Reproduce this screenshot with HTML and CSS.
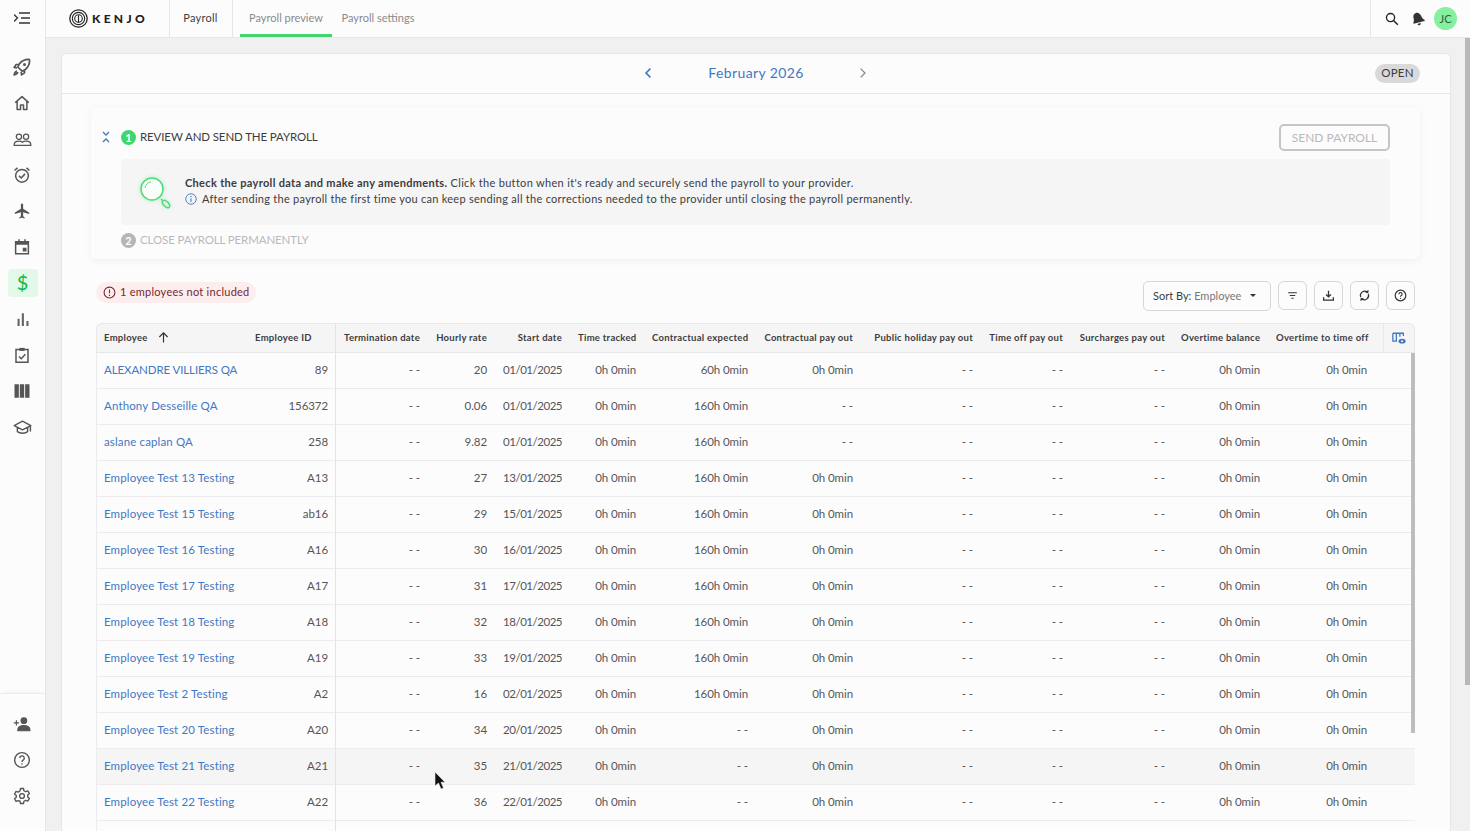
FILE: index.html
```html
<!DOCTYPE html>
<html lang="en">
<head>
<meta charset="utf-8">
<title>Kenjo Payroll</title>
<link rel="stylesheet" href="styles.css">
</head>
<body>
<div class="app">
  <aside class="side">
    <div class="side-head">
      <svg class="ico-ham" viewBox="0 0 16 12" width="16" height="12"><path d="M5 1h11M7 6h9M5 11h11M0 2.500l3.500 3.500L0 9.500" fill="none" stroke="#333" stroke-width="1.300"/></svg>
    </div>
    <nav class="side-top">
      <div class="nav"><svg viewBox="0 0 24 24" width="20" height="20"><path d="M21 3c-5-.5-9 1.500-12 5l-2 4 5 5 4-2c3.500-3 5.500-7 5-12zM8 9H5l-2.500 3.500L6 13M15 16v3l-3.500 2.500L11 18M6 17c-2 .5-3 2-3.500 4.500C5 21 6.500 20 7 18" fill="none" stroke="#555" stroke-width="2" stroke-linejoin="round"/><circle cx="15" cy="9" r="1.800" fill="#555"/></svg></div>
      <div class="nav"><svg viewBox="0 0 24 24" width="18" height="18"><path d="M3 11.500 12 3.500l9 8M5.500 10v10.500h4.500v-6h4v6h4.500V10" fill="none" stroke="#555" stroke-width="2" stroke-linejoin="round"/></svg></div>
      <div class="nav"><svg viewBox="0 0 24 24" width="19" height="19"><circle cx="7.500" cy="8.500" r="3.300" fill="none" stroke="#555" stroke-width="1.600"/><circle cx="16.500" cy="8.500" r="3.300" fill="none" stroke="#555" stroke-width="1.600"/><path d="M1.500 18.500c0-3 2.500-4.500 6-4.500 2 0 3.500.5 4.500 1.500 1-1 2.500-1.500 4.500-1.500 3.500 0 6 1.500 6 4.500v1h-21z" fill="none" stroke="#555" stroke-width="1.600" stroke-linejoin="round"/></svg></div>
      <div class="nav"><svg viewBox="0 0 24 24" width="18" height="18"><circle cx="12" cy="13" r="8.500" fill="none" stroke="#555" stroke-width="2"/><path d="m8 13 3 3 5-5.500M2 6l4-3.500M22 6l-4-3.500" fill="none" stroke="#555" stroke-width="2"/></svg></div>
      <div class="nav"><svg viewBox="0 0 24 24" width="18" height="18"><path d="M21 16v-2l-8-5V3.500a1.500 1.500 0 0 0-3 0V9l-8 5v2l8-2.500V19l-2 1.500V22l3.500-1 3.500 1v-1.500L13 19v-5.500z" fill="#555" transform="translate(.5 0)"/></svg></div>
      <div class="nav"><svg viewBox="0 0 24 24" width="18" height="18"><path d="M3.500 5h17v16h-17z" fill="none" stroke="#555" stroke-width="2"/><path d="M3.500 4h17v5h-17zM7 1.500h2V5H7zM15 1.500h2V5h-2zM13 13h5v5h-5z" fill="#555"/></svg></div>
      <div class="nav"><div class="nav-on">$</div></div>
      <div class="nav"><svg viewBox="0 0 24 24" width="17" height="17"><path d="M5 11h3v10H5zM11 3h3v18h-3zM17.500 14h3v7h-3z" fill="#666"/></svg></div>
      <div class="nav"><svg viewBox="0 0 24 24" width="18" height="18"><path d="M4 4.500h16v17H4z" fill="none" stroke="#555" stroke-width="2"/><path d="M8.500 2.500h7v4h-7z" fill="#555"/><path d="m8 14 3 3 5.500-6" fill="none" stroke="#555" stroke-width="2"/></svg></div>
      <div class="nav"><svg viewBox="0 0 24 24" width="18" height="18"><path d="M2 3h5.800v18H2zM9.100 3h5.800v18H9.100zM16.200 3H22v18h-5.800z" fill="#555"/></svg></div>
      <div class="nav"><svg viewBox="0 0 24 24" width="19" height="19"><path d="M12 4 1.500 9.500 12 15l10.500-5.500zM5.500 12v5c2 3 11 3 13 0v-5M22 10v7" fill="none" stroke="#555" stroke-width="1.800" stroke-linejoin="round"/></svg></div>
    </nav>
    <div class="side-bottom">
      <div class="nav"><svg viewBox="0 0 24 24" width="18" height="18"><circle cx="14.500" cy="7.500" r="4.500" fill="#555"/><path d="M6.500 21v-2c0-3 4-5 8-5s8 2 8 5v2zM1 10.500h7M4.500 7v7" fill="#555" stroke="#555" stroke-width="1.500"/></svg></div>
      <div class="nav"><svg viewBox="0 0 24 24" width="18" height="18"><circle cx="12" cy="12" r="9.800" fill="none" stroke="#555" stroke-width="1.800"/><path d="M9 9.500a3 3 0 1 1 4.500 2.600c-1 .6-1.500 1.200-1.500 2.400" fill="none" stroke="#555" stroke-width="1.800"/><circle cx="12" cy="17.300" r="1.100" fill="#555"/></svg></div>
      <div class="nav"><svg viewBox="0 0 24 24" width="18" height="18"><path d="m10 2h4l.6 3 2.400 1.300 2.900-1 2 3.500-2.300 2v2.400l2.300 2-2 3.500-2.900-1-2.400 1.300-.6 3h-4l-.6-3L7 18.200l-2.900 1-2-3.500 2.300-2v-2.400l-2.300-2 2-3.500 2.900 1L9.400 5z" fill="none" stroke="#555" stroke-width="1.800" stroke-linejoin="round"/><circle cx="12" cy="12" r="3.200" fill="none" stroke="#555" stroke-width="1.800"/></svg></div>
    </div>
  </aside>

  <div class="body">
    <header class="top">
      <div class="brand">
        <svg viewBox="0 0 24 24" width="19" height="19"><circle cx="12" cy="12" r="11" fill="none" stroke="#222" stroke-width="1.600"/><circle cx="12" cy="12" r="7.800" fill="none" stroke="#222" stroke-width="1.400"/><circle cx="12" cy="12" r="4.800" fill="none" stroke="#222" stroke-width="1.400"/><path d="M12 8v9" stroke="#222" stroke-width="1.400"/></svg>
        <span class="brand-name">KENJO</span>
      </div>
      <div class="top-title">Payroll</div>
      <nav class="tabs">
        <a class="tab tab-on">Payroll preview</a>
        <a class="tab">Payroll settings</a>
      </nav>
      <div class="top-right">
        <svg viewBox="0 0 24 24" width="14" height="14"><circle cx="9.500" cy="9.500" r="7" fill="none" stroke="#222" stroke-width="2.300"/><path d="m14.500 14.500 7.500 7.500" stroke="#222" stroke-width="2.500"/></svg>
        <svg class="bell" viewBox="0 0 24 24" width="14" height="14"><path d="M11 1c4 0 7 3 7.500 7.500.3 3.500 1.500 5.500 4.500 8l-1 1.500H3l-.5-1.500C5 14 5 11 5 8c0-4 2.500-7 6-7zM9 20h6c-.3 2-1.500 3-3 3s-2.700-1-3-3z" fill="#333" transform="rotate(-14 12 12)"/></svg>
        <div class="avatar">JC</div>
      </div>
    </header>

    <main class="main">
      <section class="card">
        <div class="period">
          <svg viewBox="0 0 10 14" width="8" height="12"><path d="M8 1.500 2.500 7 8 12.500" fill="none" stroke="#3f78c4" stroke-width="2"/></svg>
          <span class="month">February 2026</span>
          <svg viewBox="0 0 10 14" width="8" height="12"><path d="M2 1.500 7.500 7 2 12.500" fill="none" stroke="#888" stroke-width="1.600"/></svg>
          <span class="status">OPEN</span>
        </div>
        <div class="card-body">
          <div class="steps">
            <div class="step">
              <svg class="collapse" viewBox="0 0 8 12" width="8" height="12"><path d="M1 1l3 3 3-3M1 11l3-3 3 3" fill="none" stroke="#3f78c4" stroke-width="1.300"/></svg>
              <span class="num">1</span>
              <span class="step-title">REVIEW AND SEND THE PAYROLL</span>
              <button class="send">SEND PAYROLL</button>
            </div>
            <div class="info">
              <svg class="lens" viewBox="0 0 34 36" width="34" height="36"><circle cx="14" cy="14" r="11" fill="#fafefb" stroke="#4fdc78" stroke-width="1.500"/><path d="M7 13c.5-3 3-6 6-6" fill="none" stroke="#4fdc78"/><path d="m23 24 2 2" stroke="#4fdc78" stroke-width="1.500"/><ellipse cx="28" cy="29" rx="2.500" ry="4.500" transform="rotate(-45 28 29)" fill="none" stroke="#4fdc78" stroke-width="1.500"/></svg>
              <div class="info-text">
                <p class="info-head"><b>Check the payroll data and make any amendments.</b> Click the button when it's ready and securely send the payroll to your provider.</p>
                <p class="info-line"><svg viewBox="0 0 24 24" width="12" height="12"><circle cx="12" cy="12" r="10.500" fill="none" stroke="#3f78c4" stroke-width="1.800"/><path d="M12 10.500V18" stroke="#3f78c4" stroke-width="2"/><circle cx="12" cy="7" r="1.400" fill="#3f78c4"/></svg>After sending the payroll the first time you can keep sending all the corrections needed to the provider until closing the payroll permanently.</p>
              </div>
            </div>
            <div class="step step-off">
              <span class="num num-off">2</span>
              <span class="step-title">CLOSE PAYROLL PERMANENTLY</span>
            </div>
          </div>

          <div class="tools">
            <div class="alert"><svg viewBox="0 0 24 24" width="13" height="13"><circle cx="12" cy="12" r="10" fill="none" stroke="#7a2630" stroke-width="2"/><path d="M12 6.500v7" stroke="#7a2630" stroke-width="2"/><circle cx="12" cy="17" r="1.300" fill="#7a2630"/></svg><span>1 employees not included</span></div>
            <div class="sort"><span>Sort By: <em>Employee</em></span><i class="caret"></i></div>
            <button class="tool"><svg viewBox="0 0 24 24" width="13" height="13"><path d="M4 7h16M7 12h10M10 17h4" stroke="#333" stroke-width="2"/></svg></button>
            <button class="tool"><svg viewBox="0 0 24 24" width="13" height="13"><path d="M12 3v11M7.500 10l4.500 4.500 4.500-4.500M3 15v5.500h18V15" fill="none" stroke="#333" stroke-width="2.400"/></svg></button>
            <button class="tool"><svg viewBox="0 0 24 24" width="13" height="13"><path d="M5 15a8 8 0 0 1 12-9.500M19 9a8 8 0 0 1-12 9.500" fill="none" stroke="#333" stroke-width="2.200"/><path d="m19.500 1.500-.5 6.500-6-1.500zM4.500 22.500l.5-6.500 6 1.500z" fill="#333"/></svg></button>
            <button class="tool"><svg viewBox="0 0 24 24" width="13" height="13"><circle cx="12" cy="12" r="9.800" fill="none" stroke="#333" stroke-width="2.200"/><path d="M9 9.500a3 3 0 1 1 4.500 2.600c-1 .6-1.500 1.200-1.500 2" fill="none" stroke="#333" stroke-width="2"/><circle cx="12" cy="17.300" r="1.200" fill="#333"/></svg></button>
          </div>

          <div class="table-wrap">
            <table class="grid">
              <colgroup>
                <col class="c-name"><col class="c-id"><col class="c-term"><col class="c-rate"><col class="c-start"><col class="c-track"><col class="c-exp"><col class="c-pay"><col class="c-hol"><col class="c-off"><col class="c-sur"><col class="c-bal"><col class="c-top"><col class="c-end">
              </colgroup>
              <thead>
                <tr>
                  <th class="name">Employee <svg class="arrow" viewBox="0 0 12 12" width="11" height="11"><path d="M6 11.500V1M1.500 5.500 6 1l4.500 4.500" fill="none" stroke="#333" stroke-width="1.300"/></svg></th>
                  <th class="id">Employee ID</th><th>Termination date</th><th>Hourly rate</th><th>Start date</th><th>Time tracked</th><th>Contractual expected</th><th>Contractual pay out</th><th>Public holiday pay out</th><th>Time off pay out</th><th>Surcharges pay out</th><th>Overtime balance</th><th>Overtime to time off</th>
                  <th class="end"><svg viewBox="0 0 16 14" width="14" height="13"><path d="M1 1h12v3M1 1v9h4V1M9 1v4" fill="none" stroke="#3f78c4" stroke-width="1.500"/><ellipse cx="11.500" cy="10" rx="4" ry="2.800" fill="#3f78c4"/><circle cx="11.500" cy="10" r="1.100" fill="#fff"/></svg></th>
                </tr>
              </thead>
              <tbody>
                <tr><td class="name"><a class="caps">ALEXANDRE VILLIERS QA</a></td><td class="id">89</td><td>- -</td><td>20</td><td class="date">01/01/2025</td><td>0h 0min</td><td>60h 0min</td><td>0h 0min</td><td>- -</td><td>- -</td><td>- -</td><td>0h 0min</td><td>0h 0min</td><td></td></tr>
                <tr><td class="name"><a>Anthony Desseille QA</a></td><td class="id">156372</td><td>- -</td><td>0.06</td><td class="date">01/01/2025</td><td>0h 0min</td><td>160h 0min</td><td>- -</td><td>- -</td><td>- -</td><td>- -</td><td>0h 0min</td><td>0h 0min</td><td></td></tr>
                <tr><td class="name"><a>aslane caplan QA</a></td><td class="id">258</td><td>- -</td><td>9.82</td><td class="date">01/01/2025</td><td>0h 0min</td><td>160h 0min</td><td>- -</td><td>- -</td><td>- -</td><td>- -</td><td>0h 0min</td><td>0h 0min</td><td></td></tr>
                <tr><td class="name"><a>Employee Test 13 Testing</a></td><td class="id">A13</td><td>- -</td><td>27</td><td class="date">13/01/2025</td><td>0h 0min</td><td>160h 0min</td><td>0h 0min</td><td>- -</td><td>- -</td><td>- -</td><td>0h 0min</td><td>0h 0min</td><td></td></tr>
                <tr><td class="name"><a>Employee Test 15 Testing</a></td><td class="id">ab16</td><td>- -</td><td>29</td><td class="date">15/01/2025</td><td>0h 0min</td><td>160h 0min</td><td>0h 0min</td><td>- -</td><td>- -</td><td>- -</td><td>0h 0min</td><td>0h 0min</td><td></td></tr>
                <tr><td class="name"><a>Employee Test 16 Testing</a></td><td class="id">A16</td><td>- -</td><td>30</td><td class="date">16/01/2025</td><td>0h 0min</td><td>160h 0min</td><td>0h 0min</td><td>- -</td><td>- -</td><td>- -</td><td>0h 0min</td><td>0h 0min</td><td></td></tr>
                <tr><td class="name"><a>Employee Test 17 Testing</a></td><td class="id">A17</td><td>- -</td><td>31</td><td class="date">17/01/2025</td><td>0h 0min</td><td>160h 0min</td><td>0h 0min</td><td>- -</td><td>- -</td><td>- -</td><td>0h 0min</td><td>0h 0min</td><td></td></tr>
                <tr><td class="name"><a>Employee Test 18 Testing</a></td><td class="id">A18</td><td>- -</td><td>32</td><td class="date">18/01/2025</td><td>0h 0min</td><td>160h 0min</td><td>0h 0min</td><td>- -</td><td>- -</td><td>- -</td><td>0h 0min</td><td>0h 0min</td><td></td></tr>
                <tr><td class="name"><a>Employee Test 19 Testing</a></td><td class="id">A19</td><td>- -</td><td>33</td><td class="date">19/01/2025</td><td>0h 0min</td><td>160h 0min</td><td>0h 0min</td><td>- -</td><td>- -</td><td>- -</td><td>0h 0min</td><td>0h 0min</td><td></td></tr>
                <tr><td class="name"><a>Employee Test 2 Testing</a></td><td class="id">A2</td><td>- -</td><td>16</td><td class="date">02/01/2025</td><td>0h 0min</td><td>160h 0min</td><td>0h 0min</td><td>- -</td><td>- -</td><td>- -</td><td>0h 0min</td><td>0h 0min</td><td></td></tr>
                <tr><td class="name"><a>Employee Test 20 Testing</a></td><td class="id">A20</td><td>- -</td><td>34</td><td class="date">20/01/2025</td><td>0h 0min</td><td>- -</td><td>0h 0min</td><td>- -</td><td>- -</td><td>- -</td><td>0h 0min</td><td>0h 0min</td><td></td></tr>
                <tr class="hover"><td class="name"><a>Employee Test 21 Testing</a></td><td class="id">A21</td><td>- -</td><td>35</td><td class="date">21/01/2025</td><td>0h 0min</td><td>- -</td><td>0h 0min</td><td>- -</td><td>- -</td><td>- -</td><td>0h 0min</td><td>0h 0min</td><td></td></tr>
                <tr><td class="name"><a>Employee Test 22 Testing</a></td><td class="id">A22</td><td>- -</td><td>36</td><td class="date">22/01/2025</td><td>0h 0min</td><td>- -</td><td>0h 0min</td><td>- -</td><td>- -</td><td>- -</td><td>0h 0min</td><td>0h 0min</td><td></td></tr>
                <tr><td class="name"></td><td class="id"></td><td></td><td></td><td></td><td></td><td></td><td></td><td></td><td></td><td></td><td></td><td></td><td></td></tr>
              </tbody>
            </table>
            <div class="table-thumb"></div>
          </div>
        </div>
      </section>
    </main>
  </div>
</div>
<div class="page-thumb"></div>
<svg class="cursor" viewBox="0 0 12 20" width="12" height="20"><path d="M1 1v14l3.500-3 2.500 6 2.500-1-2.500-5.800H11z" fill="#111" stroke="#eee" stroke-width=".6"/></svg>
</body>
</html>
```

FILE: styles.css
```css
* { box-sizing: border-box; }
html, body { margin: 0; height: 831px; overflow: hidden; }
body { font-family: "Lato", "Open Sans", sans-serif; color: #3c3c3e; font-size: 12px; background: #f0f0f1; }
p { margin: 0; }
svg { display: block; flex: none; }
.app { display: flex; height: 831px; }

.side { width: 46px; flex: none; background: #fdfcfd; border-right: 1px solid #e6e6e8; display: flex; flex-direction: column; padding-right: 1px; }
.side-head { height: 36px; display: flex; align-items: center; justify-content: center; }
.side-top { padding-top: 13px; flex: 1; }
.nav { height: 36px; display: flex; align-items: center; justify-content: center; }
.nav-on { width: 30px; height: 28px; margin-left: 1px; border-radius: 4px; background: #e2f8e8; color: #12b84a; font-size: 20px; line-height: 27px; text-align: center; }
.side-bottom { height: 138px; margin-right: -1px; padding: 12px 1px 0 0; border-top: 1px solid #ececee; box-shadow: 0 -4px 6px -4px rgba(0,0,0,.06); }

.body { flex: 1; min-width: 0; display: flex; flex-direction: column; }
.top { height: 38px; flex: none; background: #fdfcfd; display: flex; align-items: stretch; border-bottom: 1px solid #e8e8ea; }
.brand { width: 124px; padding-left: 23px; display: flex; align-items: center; gap: 4px; border-right: 1px solid #e6e6e8; }
.brand-name { font-weight: 900; font-size: 12px; letter-spacing: 3.300px; color: #1e1e1e; }
.top-title { width: 63px; display: flex; align-items: center; justify-content: center; font-size: 11px; letter-spacing: .25px; border-right: 1px solid #e6e6e8; padding: 0 1px 2px 0; }
.tabs { display: flex; padding-left: 7px; flex: 1; }
.tab { width: 92px; display: flex; align-items: center; justify-content: center; color: #8a8a8c; font-size: 11px; border-bottom: 3px solid transparent; }
.tab-on { border-bottom-color: #3fd76d; }
.top-right { width: 100px; border-left: 1px solid #e6e6e8; display: flex; align-items: center; padding-left: 14px; }
.bell { margin-left: 12px; }
.avatar { width: 23px; height: 23px; margin-left: 9px; border-radius: 50%; background: #86f0a0; color: #2f5d40; font-size: 11px; display: flex; align-items: center; justify-content: center; }

.main { flex: 1; min-height: 0; padding: 15px 19px 0 15px; }
.card { height: 900px; background: #fdfcfd; border: 1px solid #e7e7e9; border-radius: 6px 6px 0 0; }
.period { height: 40px; border-bottom: 1px solid #e7e7e9; display: flex; align-items: center; padding: 0 0 1px 582px; position: relative; }
.month { width: 207px; padding: 0 0 1px 1px; text-align: center; color: #3f78c4; font-size: 14px; letter-spacing: .38px; }
.status { position: absolute; right: 30px; top: 10px; width: 45px; height: 19px; border-radius: 10px; background: #d9d9da; font-size: 11.500px; letter-spacing: .3px; line-height: 18px; text-align: center; }
.card-body { padding: 14px 30px 0 29px; }

.steps { height: 151px; background: #fdfcfd; border-radius: 6px; box-shadow: 0 2px 10px rgba(0,0,0,.05); padding: 0 30px 0 11px; }
.step { display: flex; align-items: center; height: 51px; padding-top: 7px; }
.collapse { margin-right: 11px; }
.num { width: 15px; height: 15px; border-radius: 50%; background: #3fd76d; color: #fff; font-size: 11px; font-weight: 700; text-align: center; line-height: 15px; margin-right: 4px; }
.step-title { font-size: 11.500px; letter-spacing: -.12px; padding-bottom: 2px; }
.send { margin: 1px 0 0 auto; width: 111px; height: 27px; background: #fdfcfd; border: 2px solid #c6c6c8; border-radius: 5px; color: #b9b9bb; font: inherit; font-size: 12px; letter-spacing: 0; padding: 0 0 1px; }
.info { margin-left: 19px; height: 66px; background: #f5f5f6; border-radius: 4px; display: flex; align-items: center; padding-left: 17px; gap: 13px; }
.lens { margin-top: 2px; filter: drop-shadow(0 0 2px rgba(80,220,120,.4)); }
.info-text { font-size: 11px; line-height: 16px; padding-bottom: 2px; }
.info-head { letter-spacing: .32px; }
.info-line { display: flex; align-items: center; gap: 5px; letter-spacing: .27px; }
.step-off { height: 30px; padding: 0 0 0 19px; }
.step-off .step-title { color: #b9b9bb; }
.num-off { background: #b5b5b7; }

.tools { height: 64px; padding: 22px 5px 0 5px; display: flex; align-items: flex-start; gap: 7px; }
.alert { height: 21px; margin-top: 1px; margin-right: auto; padding: 0 6px 0 7px; border-radius: 11px; background: #fceeee; color: #7a2630; display: flex; align-items: center; gap: 4px; font-size: 11px; letter-spacing: .25px; }
.alert span { padding-bottom: 2px; }
.sort { width: 128px; height: 30px; border: 1px solid #d6d6d8; border-radius: 5px; display: flex; align-items: center; padding: 0 0 1px 9px; font-size: 11px; }
.sort em { font-style: normal; color: #777; }
.caret { margin-left: 9px; border: 3.500px solid transparent; border-top-color: #333; border-bottom: 0; }
.tool { width: 29px; height: 29px; padding: 0; border: 1px solid #d6d6d8; border-radius: 6px; background: #fdfcfd; display: flex; align-items: center; justify-content: center; }

.table-wrap { margin: 0 5px; position: relative; }
.grid { width: 1319px; border-collapse: separate; border-spacing: 0; table-layout: fixed; font-size: 11.500px; letter-spacing: -.08px; }
.c-name { width: 151px; } .c-id { width: 89px; } .c-term { width: 92px; } .c-rate { width: 67px; } .c-start { width: 75px; } .c-track { width: 74px; } .c-exp { width: 112px; } .c-pay { width: 105px; } .c-hol { width: 120px; } .c-off { width: 90px; } .c-sur { width: 102px; } .c-bal { width: 95px; } .c-top { width: 107px; } .c-end { width: 40px; }
th, td { padding: 0 8px 2px; text-align: right; white-space: nowrap; overflow: hidden; }
th { height: 30px; background: #f5f5f6; font-size: 9.500px; font-weight: 700; letter-spacing: .28px; color: #3c3c3e; border-top: 1px solid #e8e8ea; border-bottom: 1px solid #e8e8ea; }
td { height: 36px; border-bottom: 1px solid #ececee; color: #555557; }
th:first-child { border-radius: 6px 0 0 0; border-left: 1px solid #e8e8ea; }
td:first-child { border-left: 1px solid #ececee; }
th:last-child { border-radius: 0 6px 0 0; border-right: 1px solid #e8e8ea; }
th.name, td.name { text-align: left; padding-left: 7px; }
th.id { text-align: left; }
th.id, td.id { border-right: 1px solid #e4e4e6; }
td.id { padding-right: 7px; }
th.end { padding: 0 0 0 8px; background: linear-gradient(#e8e8ea, #e8e8ea) 8px 0 / 1px 100% no-repeat #f5f5f6; }
th.end svg { margin: 0 auto; }
td a { color: #3f78c4; letter-spacing: .14px; }
td a.caps { letter-spacing: -.1px; }
td.date { letter-spacing: -.47px; }
.arrow { display: inline-block; vertical-align: -2px; margin-left: 8px; }
.hover td { background: #f5f5f6; }
.table-thumb { position: absolute; right: 0; top: 30px; width: 4px; height: 380px; background: #bdbdbf; }
.page-thumb { position: absolute; right: 0; top: 38px; width: 5px; height: 647px; background: #b8b8ba; }
.cursor { position: absolute; left: 434px; top: 771px; }
```
